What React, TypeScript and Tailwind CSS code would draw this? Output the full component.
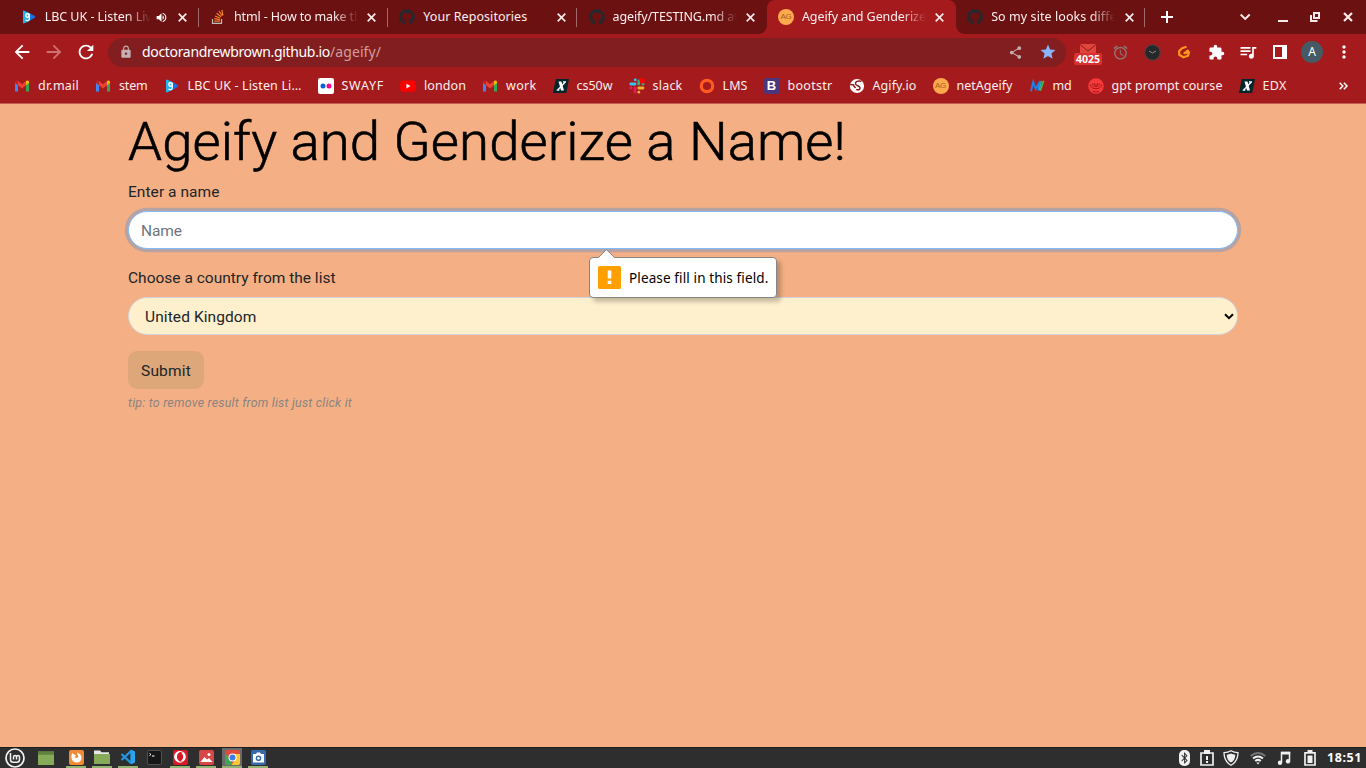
import { useLayoutEffect, useRef, type ReactNode } from 'react';
import { FaGithub, FaBluetoothB, FaOpera } from 'react-icons/fa';
import {
  MdArrowBack, MdArrowForward, MdRefresh, MdLock, MdShare, MdStar, MdExtension,
  MdQueueMusic, MdMoreVert, MdAlarm, MdVolumeUp,
} from 'react-icons/md';

/* One line of text, tracked so that it fills the given width. */
function Fit({ w, className = '', children }: { w: number; className?: string; children: string }) {
  const ref = useRef<HTMLSpanElement>(null);
  useLayoutEffect(() => {
    const el = ref.current;
    if (!el) return;
    el.style.letterSpacing = '0px';
    const natural = el.getBoundingClientRect().width;
    el.style.letterSpacing = `${(w - natural) / children.length}px`;
  }, [w, children]);
  return (
    <span className={`block shrink-0 whitespace-pre ${className}`} style={{ width: w }}>
      <span ref={ref} className="inline-block">{children}</span>
    </span>
  );
}

const Gmail = () => (
  <svg width="16" height="16" viewBox="0 0 16 16">
    <path d="M1 4v9.5h3V7z" fill="#4285f4" />
    <path d="M15 4v9.5h-3V7z" fill="#34a853" />
    <path d="M1 4.2C1 2.5 2.8 2 4 3v4.3L1 5z" fill="#c5221f" />
    <path d="M15 4.2C15 2.5 13.2 2 12 3v4.3L15 5z" fill="#fbbc04" />
    <path d="M4 3l4 3.2L12 3v4.2l-4 3.2-4-3.2z" fill="#ea4335" />
  </svg>
);

const Lbc = () => (
  <svg width="16" height="16" viewBox="0 0 16 16">
    <path d="M2 2.500q0-1.300 1.200-.8L8 3.700v8.600l-4.800 2q-1.200.5-1.200-.8z" fill="#22b5f2" />
    <path d="M8 3.700l5.700 3.300q1 .9 0 1.800L8 12.300z" fill="#1473e6" />
    <circle cx="6.500" cy="6.500" r="1.700" fill="none" stroke="#fff" strokeWidth="1.400" />
    <path d="M8.300 4.700v5.200c0 2-2.500 2.200-3.800 1.200" fill="none" stroke="#fff" strokeWidth="1.300" />
  </svg>
);

const Stack = () => (
  <svg width="16" height="16" viewBox="0 0 16 16" fill="none">
    <path d="M2.500 10v4.300h9V10" stroke="#bcbbbb" strokeWidth="1.200" />
    <path d="M4.200 12.200h5.700M4.300 9.600l5.600 1M5 7l5.200 2.300M6.600 4.200l4.500 3.600M9 2l3.300 4.800M11.900.8l1 5.500" stroke="#f48024" strokeWidth="1.200" />
  </svg>
);

const Ag = () => (
  <span className="flex size-4 items-center justify-center rounded-full bg-[#ffa94f] font-['Liberation_Sans'] text-[8px] leading-none tracking-[-0.3px] text-[#a5601f]">AG</span>
);

const Hub = () => <FaGithub size={16} color="#24292e" />;

const Flickr = () => (
  <svg width="16" height="16" viewBox="0 0 16 16">
    <rect width="16" height="16" rx="2" fill="#fff" />
    <circle cx="5" cy="8" r="2.500" fill="#0063dc" />
    <circle cx="11" cy="8" r="2.500" fill="#ff0084" />
  </svg>
);

const Youtube = () => (
  <svg width="16" height="16" viewBox="0 0 16 16">
    <rect x=".3" y="2.500" width="15.400" height="11.300" rx="3" fill="#f00" />
    <path d="M6.400 5.800l4.100 2.300-4.100 2.400z" fill="#fff" />
  </svg>
);

const Edx = () => (
  <svg width="16" height="16" viewBox="0 0 16 16">
    <path d="M2.800 1H16l-2.800 14H0z" fill="#02262b" />
    <path d="M5.500 3.500h3l2.500 9H8z" fill="#fff" />
    <path d="M12.300 4L4.700 12M10 3.900h3M3.700 12.100h2.600" stroke="#fff" strokeWidth="1.300" fill="none" />
  </svg>
);

const Slack = () => (
  <svg width="16" height="16" viewBox="0 0 16 16" strokeWidth="2.800" strokeLinecap="round">
    <path d="M6.200 1.800h.1M1.800 6h4.200" stroke="#36c5f0" />
    <path d="M9.800 3V6M14 6h.1" stroke="#2eb67d" />
    <path d="M9.800 14.200h.1M9.800 10h4.200" stroke="#ecb22e" />
    <path d="M6.100 10v4M1.800 10h.1" stroke="#e01e5a" />
    <circle cx="13.200" cy="2.800" r="2.700" fill="#f00" />
  </svg>
);

const Ring = () => (
  <svg width="16" height="16" viewBox="0 0 16 16">
    <circle cx="8" cy="8" r="5.700" fill="none" stroke="#ff5a1f" strokeWidth="3.200" />
  </svg>
);

const Boot = () => (
  <span className="flex size-4 items-center justify-center rounded-[2px] bg-[#4b367c] font-['Liberation_Sans'] text-[13px] leading-none font-bold text-white">B</span>
);

const Agify = () => (
  <svg width="16" height="16" viewBox="0 0 16 16">
    <circle cx="8" cy="8" r="7.100" fill="#fff" />
    <path d="M12.500 3.200C9 2.500 6 3.500 6.500 5.800s4.500 1.700 4.500 4.200c0 2-2.500 2.300-3.700 1.200M1.200 6.500l4 .5M4.500 7.500l2 2.500" fill="none" stroke="#8f1719" strokeWidth="1.500" />
  </svg>
);

const Md = () => (
  <svg width="16" height="16" viewBox="0 0 16 16" fill="none">
    <path d="M2 13.200L4.200 4l2.600 7L11 3.200l-1.700 9.500" stroke="#1c83e8" strokeWidth="1.900" />
    <path d="M14.600 2.800l-3.300 10" stroke="#50bd3d" strokeWidth="1.600" />
    <path d="M12.400 3l-2 9" stroke="#20b7aa" strokeWidth="1.300" />
  </svg>
);

const Gpt = () => (
  <svg width="16" height="16" viewBox="0 0 16 16" fill="none">
    <circle cx="8" cy="8" r="7.800" fill="#f8393c" />
    <path d="M2.200 6.500a5.900 5.200 0 0 0 11.600 0M4.200 5.700a3.900 3.700 0 0 0 7.600 0M6 5a2 2 0 0 0 4 0M5 13.400q3 1 6 0" stroke="#a5181b" strokeWidth="1" />
  </svg>
);

const Cross = () => (
  <svg width="9" height="9" viewBox="0 0 9 9" className="shrink-0">
    <path d="M.7.700l7.600 7.600M8.300.700L.7 8.300" stroke="#f6e8e8" strokeWidth="1.700" />
  </svg>
);

const tabs: { icon: ReactNode; title: string; w: number; fade?: boolean; audio?: boolean; active?: boolean }[] = [
  { icon: <Lbc />, title: 'LBC UK - Listen Liv', w: 107, fade: true, audio: true },
  { icon: <Stack />, title: 'html - How to make th', w: 127.5, fade: true },
  { icon: <Hub />, title: 'Your Repositories', w: 104 },
  { icon: <Hub />, title: 'ageify/TESTING.md at', w: 126, fade: true },
  { icon: <Ag />, title: 'Ageify and Genderize', w: 124, fade: true, active: true },
  { icon: <Hub />, title: 'So my site looks diffe', w: 125.5, fade: true },
];

const bookmarks: [ReactNode, string, number][] = [
  [<Gmail />, 'dr.mail', 41],
  [<Gmail />, 'stem', 28.5],
  [<Lbc />, 'LBC UK - Listen Li…', 114],
  [<Flickr />, 'SWAYF', 42.5],
  [<Youtube />, 'london', 42],
  [<Gmail />, 'work', 30.5],
  [<Edx />, 'cs50w', 36],
  [<Slack />, 'slack', 30],
  [<Ring />, 'LMS', 25],
  [<Boot />, 'bootstr', 45],
  [<Agify />, 'Agify.io', 44],
  [<Ag />, 'netAgeify', 56],
  [<Md />, 'md', 19],
  [<Gpt />, 'gpt prompt course', 111],
  [<Edx />, 'EDX', 24],
];

function TabStrip() {
  return (
    <div className="flex h-[34px] bg-[#6b1112] pl-[9.5px]">
      {tabs.map((t, i) => (
        <div
          key={t.title}
          className={`relative flex h-[34px] w-[189.3px] shrink-0 items-center pl-[11.2px] ${t.active ? 'rounded-t-[8px] bg-[#a51b1d]' : ''}`}
        >
          <span className="size-4 shrink-0">{t.icon}</span>
          <span
            className={`ml-2 flex overflow-hidden ${t.audio ? 'w-[106px]' : 'w-[124px]'} ${
              t.fade ? '[mask-image:linear-gradient(to_right,#000_calc(100%-24px),transparent)]' : ''
            }`}
          >
            <Fit w={t.w} className="text-[12.5px] leading-[18px] text-[#fbeeee]">{t.title}</Fit>
          </span>
          {t.audio && <span className="ml-1 w-[14px]"><MdVolumeUp size={13} color="#fff" /></span>}
          <span className="ml-[9.5px]"><Cross /></span>
          {!t.active && i !== 3 && <span className="absolute top-2 right-0 h-[19px] w-px bg-[#a56b6c]" />}
          {t.active && (
            <>
              <span className="absolute bottom-0 -left-2 size-2 bg-[radial-gradient(circle_at_0_0,transparent_7.5px,#a51b1d_8px)]" />
              <span className="absolute -right-2 bottom-0 size-2 bg-[radial-gradient(circle_at_100%_0,transparent_7.5px,#a51b1d_8px)]" />
            </>
          )}
        </div>
      ))}
      <svg className="ml-[15.7px] h-[34px] w-3" viewBox="0 0 12 34"><path d="M6 11v12M0 17h12" stroke="#fff" strokeWidth="2" /></svg>
      <svg className="ml-auto h-[34px] w-[126px]" viewBox="1240 0 126 34" fill="none" stroke="#f6eaea">
        <path d="M1240.700 14.500l4.500 4.500 4.500-4.500" strokeWidth="1.900" />
        <path d="M1278 21h10" strokeWidth="2" />
        <path d="M1314 13h5v5h-5z" strokeWidth="2" />
        <path d="M1311 15v6h6.500" strokeWidth="2" />
        <path d="M1344 13l8 8M1352 13l-8 8" strokeWidth="2.200" />
      </svg>
    </div>
  );
}

function Toolbar() {
  return (
    <div className="flex h-9 items-center bg-[#a51b1d] pl-[11px]">
      <MdArrowBack size={22} color="#fff" className="mr-[10px] shrink-0" />
      <MdArrowForward size={22} color="#cf7273" className="mr-[10px] shrink-0" />
      <MdRefresh size={22} color="#fff" className="shrink-0" />
      <div className="ml-[11px] flex h-[29px] w-[958px] shrink-0 items-center rounded-full bg-[#821e1f] pl-[11px]">
        <MdLock size={14} color="#c4b0b0" className="mr-[9px]" />
        <Fit w={188} className="text-[14px] leading-5 text-white">doctorandrewbrown.github.io</Fit>
        <Fit w={51} className="text-[14px] leading-5 text-[#d09ea0]">/ageify/</Fit>
        <MdShare size={15} color="#c4b0b0" className="ml-auto" />
        <MdStar size={18} color="#8ab4f8" className="mr-[9px] ml-[16px]" />
      </div>
      <div className="ml-[6px] flex shrink-0">
        <span className="relative flex w-8 justify-center">
          <svg width="16" height="20" viewBox="0 0 16 20"><path d="M0 3h16v12H0z" fill="#e0453c" /><path d="M0 3.500l8 6.500 8-6.500" fill="none" stroke="#8d1d1b" /></svg>
          <span className="absolute top-[12px] left-[2px] flex h-3 w-7 items-center justify-center rounded-[2px] bg-[#d93030] text-[10.5px] leading-none font-bold text-white">4025</span>
        </span>
        <span className="flex w-8 items-center justify-center"><MdAlarm size={17} color="#8f7475" /></span>
        <span className="flex w-8 items-center justify-center">
          <svg width="17" height="17" viewBox="0 0 17 17"><circle cx="8.500" cy="8.500" r="7.700" fill="#252729" stroke="#49494b" /><path d="M5 7l3.500 2L12 7" fill="none" stroke="#8c8c8c" /></svg>
        </span>
        <span className="flex w-8 items-center justify-center">
          <svg width="16" height="16" viewBox="0 0 16 16" fill="none"><path d="M10.500 2.700L6 4.300 3.200 7v3.800L7.500 13.300l4.500-1.500 1-3.600-4.500 1 4-3.200" stroke="#ff9818" strokeWidth="2.200" strokeLinejoin="round" /></svg>
        </span>
        <span className="flex w-8 items-center justify-center"><MdExtension size={17} color="#fff" /></span>
        <span className="flex w-8 items-center justify-center"><MdQueueMusic size={20} color="#fff" /></span>
        <span className="flex w-8 items-center justify-center">
          <svg width="14" height="14" viewBox="0 0 14 14"><path d="M1 1h12v12H1z" fill="none" stroke="#fff" strokeWidth="2" /><path d="M9 1h4v12H9z" fill="#fff" /></svg>
        </span>
        <span className="flex w-8 items-center justify-center">
          <span className="flex size-[22px] items-center justify-center rounded-full bg-[#455a64] text-[12px] leading-none text-white">A</span>
        </span>
        <span className="flex w-8 items-center justify-center"><MdMoreVert size={20} color="#fff" /></span>
      </div>
    </div>
  );
}

function Bookmarks() {
  return (
    <div className="flex h-[34px] items-center gap-4 border-b border-[#c25b50] bg-[#a51b1d] pb-[2px] pl-[14px]">
      {bookmarks.map(([icon, label, w], i) => (
        <div key={i} className="flex items-center gap-2">
          <span className="size-4 shrink-0">{icon}</span>
          <Fit w={w} className="text-[12.5px] leading-[18px] text-[#fbeeee]">{label}</Fit>
        </div>
      ))}
      <svg width="9" height="8" viewBox="0 0 9 8" className="mr-[18px] ml-auto" fill="none"><path d="M.7.800L3.800 4 .7 7.200M4.900.800L8 4 4.900 7.200" stroke="#fff" strokeWidth="1.500" /></svg>
    </div>
  );
}

function Popup() {
  return (
    <div className="absolute top-[77px] left-[461px] flex h-[41px] w-[188px] items-center rounded-[4px] border border-[#858585] bg-white pl-2 font-['Noto_Sans',sans-serif] shadow-[4px_4px_4px_rgba(0,0,0,0.22)]">
      <svg className="absolute -top-[9px] left-[8px]" width="18" height="10" viewBox="0 0 18 10"><path d="M.5 9L8.500 1l8 8v1H.5z" fill="#fff" /><path d="M.5 8.500L8.500.500l8 8" fill="none" stroke="#858585" /></svg>
      <svg width="23" height="23" viewBox="0 0 23 23" className="mr-2"><rect width="23" height="23" rx="1.500" fill="#ffa000" /><path d="M9.700 4.500h3.600v8H9.700zM9.700 14.700h3.600V18H9.700z" fill="#fff" /></svg>
      <Fit w={139.5} className="text-[13.5px] leading-5 text-black">Please fill in this field.</Fit>
    </div>
  );
}

function Page() {
  return (
    <main className="flex-1 bg-[#f4b084] px-32 font-[Roboto,sans-serif] text-[#212529]">
      <h1 className="flex h-[76px] pt-1 font-light text-black [-webkit-text-stroke:0.6px_black]">
        <Fit w={718} className="text-[54.5px] leading-[67px]">Ageify and Genderize a Name!</Fit>
      </h1>
      <div className="relative">
        <label className="block h-[31px]"><Fit w={91.5} className="text-[15.5px] leading-6">Enter a name</Fit></label>
        <div className="flex h-[38px] items-center rounded-full border border-[#80bdff] bg-white pt-px pl-3 shadow-[0_0_0_3.2px_rgba(0,123,255,0.25)]">
          <Fit w={41} className="text-[15.5px] leading-6 text-[#6c757d]">Name</Fit>
        </div>
        <label className="block h-[48px] pt-[17px]"><Fit w={207.5} className="text-[15.5px] leading-6">Choose a country from the list</Fit></label>
        <div className="flex h-[38px] items-center justify-between rounded-full border border-[#ced4da] bg-[#fff0cd] pr-[3px] pl-4">
          <Fit w={111.5} className="pt-[2px] text-[15.5px] leading-6">United Kingdom</Fit>
          <svg width="10" height="7" viewBox="0 0 10 7"><path d="M1 1.200l4 3.900 4-3.900" fill="none" stroke="#000" strokeWidth="2" /></svg>
        </div>
        <Popup />
      </div>
      <button type="button" className="mt-4 flex h-[38px] w-[76px] items-center rounded-[9px] bg-[#dda779] pt-px pl-[13px]">
        <Fit w={50} className="text-left text-[15.5px] leading-6">Submit</Fit>
      </button>
      <p className="mt-1 text-[#898482] italic"><Fit w={224} className="text-[12.4px] leading-5">tip: to remove result from list just click it</Fit></p>
    </main>
  );
}

const Folder = ({ open }: { open?: boolean }) => (
  <svg width="16" height="16" viewBox="0 0 16 16">
    {open ? (
      <><path d="M0 1.500h6l1.500 1.800H15V13H0z" fill="#e7e7e7" /><path d="M0 5h16v10H0z" fill="#86aa58" /></>
    ) : (
      <><path d="M0 1.500h16V15H0z" fill="#86aa58" /><path d="M0 1.500h16v3.300H0z" fill="#618240" /></>
    )}
  </svg>
);

const apps: { icon: ReactNode; run?: boolean; on?: boolean }[] = [
  {
    run: true,
    icon: <svg width="15" height="15" viewBox="0 0 15 15"><rect width="15" height="15" rx="2" fill="#f28b35" /><path d="M2.500 5l1-2 1.500 1.500q1.500 0 2 .8L5.500 6.800q1 1.800 3.200.6 1.300-1-.2-2.900L8 2.500q4.800 1.500 4.500 5.800-.5 4.200-5 4.200-4.600-.3-5-4.500z" fill="#fff" /></svg>,
  },
  { run: true, icon: <Folder open /> },
  {
    run: true,
    icon: <svg width="16" height="16" viewBox="0 0 16 16"><path d="M11.500 1.500v13M11.500 1.500L1.500 11M11.500 14.500L1.500 5" stroke="#2494df" strokeWidth="2.400" fill="none" /><path d="M11 .8l4 1.700v11l-4 1.700z" fill="#29a5ef" /></svg>,
  },
  {
    icon: <svg width="15" height="15" viewBox="0 0 15 15"><rect x=".5" y=".5" width="14" height="14" rx="1.500" fill="#171717" stroke="#505050" /><path d="M2.500 3.500l1.500 1-1.500 1.200M5 6h2.500" fill="none" stroke="#fff" /></svg>,
  },
  {
    run: true,
    icon: <span className="flex size-[15px] items-center justify-center rounded-[2px] bg-[#d91925]"><FaOpera size={12} color="#fff" /></span>,
  },
  {
    run: true,
    icon: <svg width="15" height="15" viewBox="0 0 15 15"><rect width="15" height="15" rx="2" fill="#d84646" /><path d="M1.500 12l4-5 2.500 2.500 2-1.500 3.500 4z" fill="#fff" /><circle cx="10" cy="4.500" r="1.500" fill="#fff" /></svg>,
  },
  {
    run: true,
    on: true,
    icon: <svg width="15" height="15" viewBox="0 0 15 15"><rect width="15" height="15" rx="2" fill="#e24b3c" /><path d="M0 3l5 6 2.500 6H2q-2 0-2-2z" fill="#3fa757" /><path d="M8 4h7v9q0 2-2 2H6.500l4-6z" fill="#fbc934" /><circle cx="7.500" cy="7.500" r="4" fill="#fff" /><circle cx="7.500" cy="7.500" r="3" fill="#3f7de0" /></svg>,
  },
  {
    run: true,
    icon: <svg width="15" height="15" viewBox="0 0 15 15"><rect width="15" height="15" rx="2" fill="#3769ad" /><path d="M2 4h3l1-1.500h3L10 4h3v8.500H2z" fill="#fff" /><circle cx="7.500" cy="8.200" r="2.800" fill="#3769ad" /><circle cx="7.500" cy="8.200" r="1.300" fill="#fff" /></svg>,
  },
];

function Taskbar() {
  return (
    <footer className="flex h-[21px] items-center border-t border-[#1d1d1d] bg-[#2e2e2e] pl-[5px]">
      <svg width="20" height="20" viewBox="0 0 20 20" fill="none" stroke="#f2f2f2" className="shrink-0">
        <circle cx="10" cy="10" r="9" strokeWidth="1.700" />
        <path d="M5.500 5v6.500q0 2.800 2.800 2.800h3.400q2.800 0 2.800-2.800V9q0-1.600-1.500-1.600T11.500 9v2.500M11.500 9q0-1.600-1.500-1.600T8.500 9v2.500" strokeWidth="1.500" />
      </svg>
      <span className="ml-[13px]"><Folder /></span>
      <div className="ml-[12px] flex gap-[6px]">
        {apps.map((a, i) => (
          <span
            key={i}
            className={`flex h-5 w-5 items-center justify-center border-b-2 ${a.run ? 'border-[#92b372]' : 'border-transparent'} ${a.on ? 'bg-[#6a6a6a]' : ''}`}
          >
            {a.icon}
          </span>
        ))}
      </div>
      <div className="ml-auto flex items-center">
        <span className="mr-[10px] flex h-4 w-[11px] items-center justify-center rounded-[5px] bg-[#f0f0f0]"><FaBluetoothB size={12} color="#2e2e2e" /></span>
        <svg width="14" height="16" viewBox="0 0 14 16" className="mr-[9px]"><path d="M1 3h12v12H1z" fill="none" stroke="#f0f0f0" strokeWidth="1.700" /><path d="M4 0h6v4H4zM6 6h2v4H6zM6 11h2v2H6z" fill="#f0f0f0" /></svg>
        <svg width="16" height="16" viewBox="0 0 16 16" className="mr-[11px]"><path d="M8 .8c2.500 1.500 4.500 1.800 7 1.800C15 9 13 12.500 8 15.300 3 12.500 1 9 1 2.600c2.500 0 4.500-.3 7-1.800z" fill="none" stroke="#f0f0f0" strokeWidth="1.300" /><path d="M8 3.600c1.600.8 2.900 1 4.300 1.100C12 8.600 11 10.800 8 12.600 5 10.800 4 8.600 3.700 4.700 5.100 4.600 6.400 4.400 8 3.600z" fill="#f0f0f0" /></svg>
        <svg width="16" height="14" viewBox="0 0 16 14" fill="none" strokeWidth="2" className="mr-[11px]"><path d="M.7 5Q8-1 15.300 5" stroke="#777" /><path d="M3 7.600q5-4.200 10 0" stroke="#f0f0f0" /><path d="M5.200 10q2.800-2.300 5.600 0" stroke="#f0f0f0" /><path d="M6.300 11.500h3.400L8 13.500z" fill="#f0f0f0" /></svg>
        <svg width="14" height="14" viewBox="0 0 14 14" className="mr-[13px]"><path d="M4.500 11.500V1.500h8v8.500" fill="none" stroke="#f0f0f0" strokeWidth="1.500" /><path d="M4 .8h9.200v2.700H4z" fill="#f0f0f0" /><circle cx="3" cy="11.700" r="2.200" fill="#f0f0f0" /><circle cx="11" cy="10.300" r="2.200" fill="#f0f0f0" /></svg>
        <svg width="12" height="16" viewBox="0 0 12 16" className="mr-[11px]"><path d="M1 2.800h10V15H1z" fill="none" stroke="#f0f0f0" strokeWidth="1.700" /><path d="M3.500 0h5v3h-5zM3.500 5.500h5v7.500h-5z" fill="#f0f0f0" /></svg>
        <Fit w={35} className="mr-1 text-[12.5px] leading-5 font-bold text-white">18:51</Fit>
      </div>
    </footer>
  );
}

export default function App() {
  return (
    <div className="flex h-screen w-screen flex-col overflow-hidden font-['Noto_Sans',sans-serif]">
      <TabStrip />
      <Toolbar />
      <Bookmarks />
      <Page />
      <Taskbar />
    </div>
  );
}
